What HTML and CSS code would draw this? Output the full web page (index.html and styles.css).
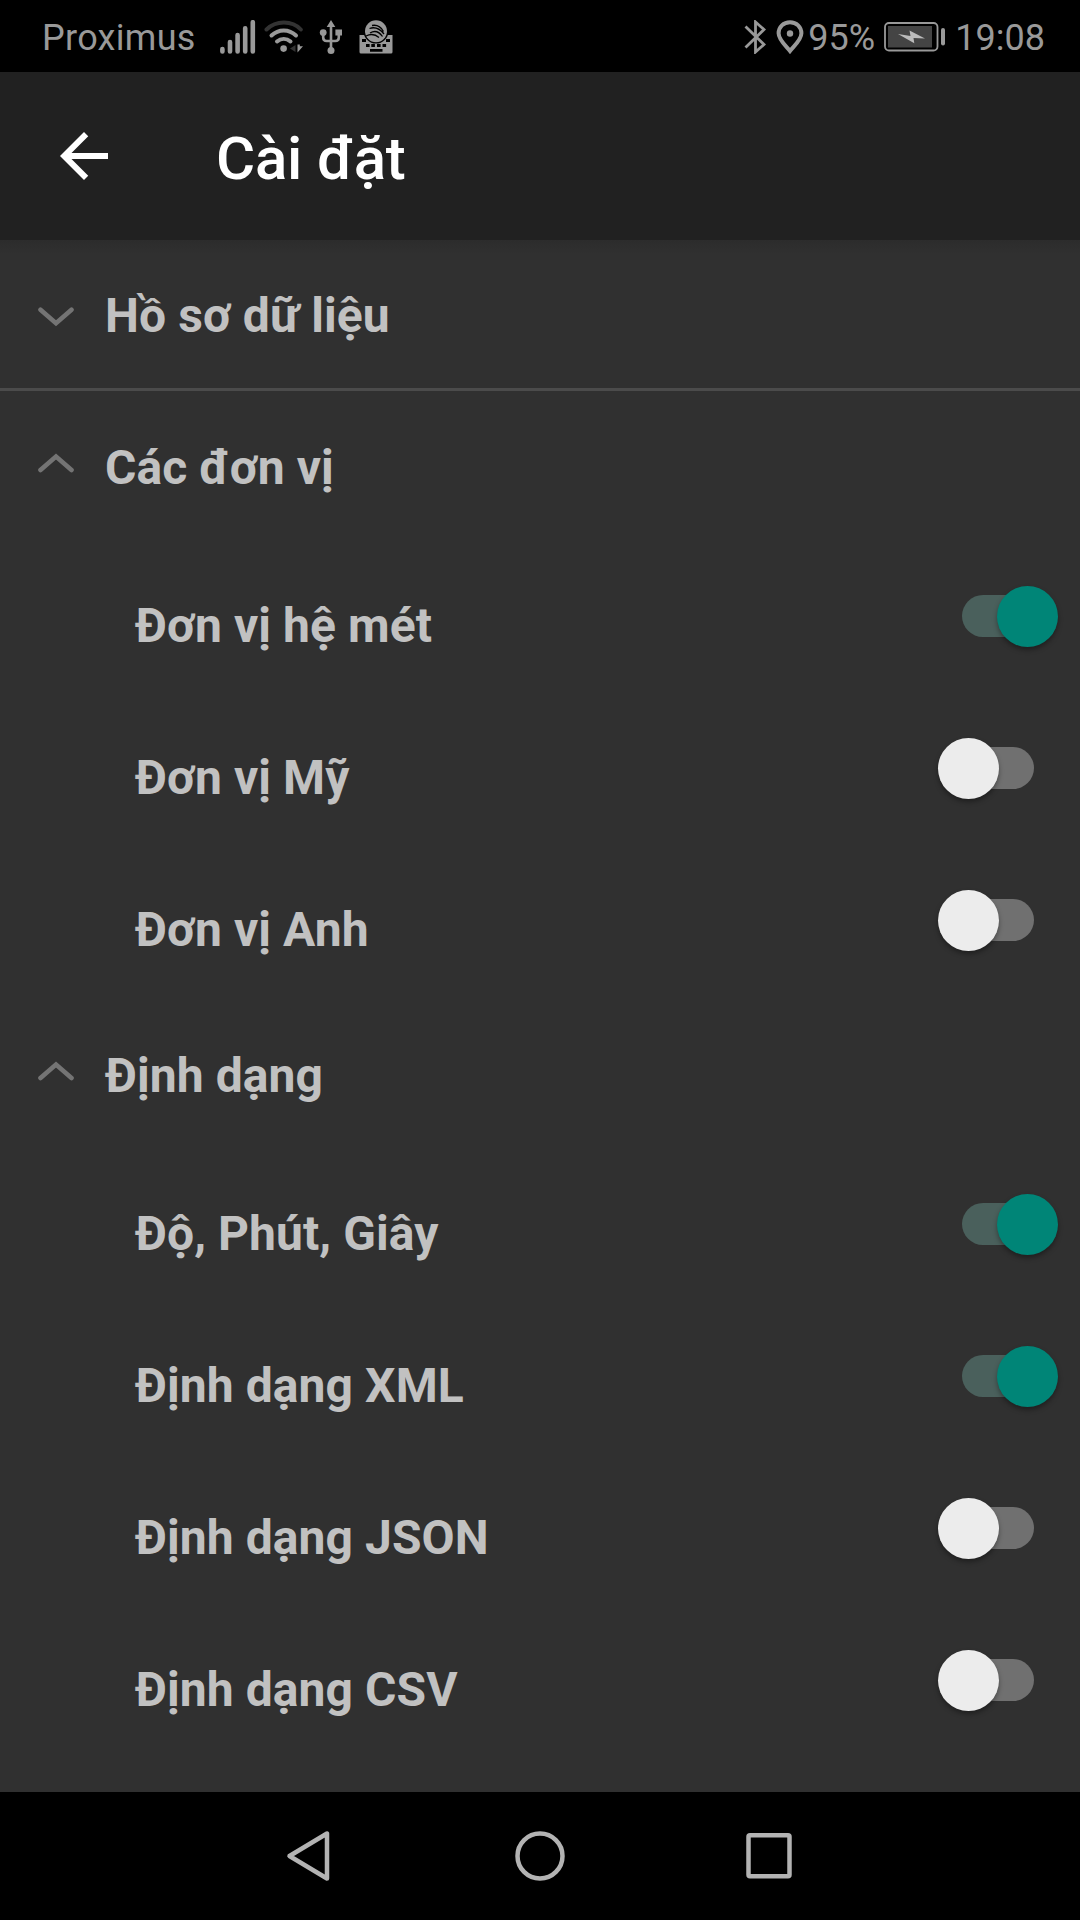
FILE: index.html
```html
<!DOCTYPE html>
<html lang="vi">
<head>
    <meta charset="UTF-8">
    <meta name="viewport" content="width=device-width, initial-scale=1.0">
    <title>Cài đặt</title>
    <link rel="stylesheet" href="styles.css">
</head>
<body>
    <div class="status-bar">
        <span class="carrier">Proximus</span>
        <svg class="signal" width="36" height="34" viewBox="0 0 36 34">
            <path d="M2.400 29v2.400M10 22v9.400M17.600 15v16.400M25.200 8.200v23.200M32.800 2.200v29.200"/>
        </svg>
        <svg class="wifi" width="40" height="34" viewBox="0 0 40 34">
            <path class="dim" d="M2.500 9.500C12 .2 28 .2 36.800 9.500"/>
            <path d="M7.500 15.500C14.500 8.700 25 8.700 32 15.500M13 21.500C17 18 22.500 18 26.500 21.500"/>
            <circle cx="19.600" cy="28.600" r="3.300"/>
            <path class="down" d="M31.500 25v7l-5.500-3.500z"/>
            <path class="up" d="M33.500 24.500v8l5.500-6.200h-3.200v-1.800z"/>
        </svg>
        <svg class="usb" width="24" height="34" viewBox="0 0 24 34">
            <path class="line" d="M12 4v25M4.200 13v4.500q0 3.500 3.500 3.500h8.600q3.500 0 3.500-3.500V13"/>
            <path d="M12 0l4.300 7H7.700zM16.400 9.500h6.600v6h-6.600z"/>
            <circle cx="4.200" cy="12.600" r="3.400"/>
            <circle cx="12" cy="30.400" r="3.500"/>
        </svg>
        <svg class="keyboard" width="34" height="34" viewBox="0 0 34 34">
            <path d="M.5 15h33v17q0 1.500-1.500 1.500H2q-1.500 0-1.500-1.500z"/>
            <circle class="ring" cx="17" cy="11.200" r="12.400"/>
            <circle cx="17" cy="11.200" r="11"/>
            <path class="swirl" d="M13 5.500c5-1 9 1.500 11.500 6M10.500 8.500C16 6.500 21 9 25 14M11 13c5-3 9-1.500 12.500 3.500M7 16c5-2.500 9-2 13 1.500"/>
            <path class="keys" d="M3 19h4v3H3zM27 19h4v3h-4zM7 24h3.600v3H7zM12.300 24h3.600v3h-3.600zM18 24h3.600v3H18zM23.500 24h3.600v3h-3.600zM11 29h12.500v2.800H11z"/>
        </svg>
        <svg class="bluetooth" width="22" height="34" viewBox="0 0 22 34">
            <path d="M1.500 6.500L20 24.500l-8.500 7.500V2L20 9.500 1.500 27.500"/>
        </svg>
        <svg class="location" width="28" height="34" viewBox="0 0 28 34">
            <path d="M14 2.200C7.500 2.200 2.600 7 2.600 13.300 2.600 20 10.500 26.500 14 31c3.500-4.500 11.400-11 11.400-17.700C25.400 7 20.500 2.200 14 2.200z"/>
            <circle cx="14" cy="13.500" r="3.200"/>
        </svg>
        <span class="percent">95%</span>
        <svg class="battery" width="62" height="30" viewBox="0 0 62 30">
            <rect class="outline" x="1" y="1" width="52.500" height="27.500" rx="4"/>
            <rect class="level" x="4" y="4" width="44" height="21.500"/>
            <path class="bolt" d="M14 12l12.500 2-1-5.500L41 16.500l-11.500-.5.800 5.300z"/>
            <rect class="tip" x="57" y="6" width="4" height="17.500" rx="2"/>
        </svg>
        <span class="clock">19:08</span>
    </div>

    <div class="toolbar">
        <svg class="back" width="72" height="72" viewBox="0 0 24 24">
            <path d="M20 11H7.830l5.590-5.590L12 4l-8 8 8 8 1.410-1.410L7.830 13H20z"/>
        </svg>
        <h1>Cài đặt</h1>
    </div>

    <div class="settings">
        <div class="group closed">
            <div class="group-header">
                <svg class="chevron" width="36" height="20" viewBox="0 0 36 20"><path d="M2.500 2.800L18 16.300 33.500 2.800"/></svg>
                <span>Hồ sơ dữ liệu</span>
            </div>
        </div>

        <div class="group">
            <div class="group-header">
                <svg class="chevron" width="36" height="20" viewBox="0 0 36 20"><path d="M2.500 17L18 3.500 33.500 17"/></svg>
                <span>Các đơn vị</span>
            </div>
            <div class="item"><span>Đơn vị hệ mét</span><div class="switch on"><div class="thumb"></div></div></div>
            <div class="item"><span>Đơn vị Mỹ</span><div class="switch"><div class="thumb"></div></div></div>
            <div class="item"><span>Đơn vị Anh</span><div class="switch"><div class="thumb"></div></div></div>
        </div>

        <div class="group">
            <div class="group-header">
                <svg class="chevron" width="36" height="20" viewBox="0 0 36 20"><path d="M2.500 17L18 3.500 33.500 17"/></svg>
                <span>Định dạng</span>
            </div>
            <div class="item"><span>Độ, Phút, Giây</span><div class="switch on"><div class="thumb"></div></div></div>
            <div class="item"><span>Định dạng XML</span><div class="switch on"><div class="thumb"></div></div></div>
            <div class="item"><span>Định dạng JSON</span><div class="switch"><div class="thumb"></div></div></div>
            <div class="item"><span>Định dạng CSV</span><div class="switch"><div class="thumb"></div></div></div>
        </div>
    </div>

    <div class="nav-bar">
        <svg width="50" height="52" viewBox="0 0 50 52"><path d="M41 3.500v45L3.500 26z"/></svg>
        <svg width="50" height="52" viewBox="0 0 50 52"><circle cx="25" cy="26" r="22.500"/></svg>
        <svg width="50" height="52" viewBox="0 0 50 52"><rect x="4.500" y="5.200" width="41" height="41" rx="1.500"/></svg>
    </div>
</body>
</html>
```

FILE: styles.css
```css
* {
    box-sizing: border-box;
}
body {
    font-family: Roboto, 'Noto Sans', sans-serif;
    margin: 0;
    width: 1080px;
    height: 1920px;
    background: #303030;
    display: flex;
    flex-direction: column;
    overflow: hidden;
}
svg {
    display: block;
    flex: none;
}

/* Status bar */
.status-bar {
    display: flex;
    align-items: center;
    height: 72px;
    padding: 2px 35px 0 42px;
    background: #000;
    color: #999;
    fill: #999;
    stroke: none;
    font-size: 36px;
    line-height: 42px;
}
.status-bar span {
    margin-top: 1px;
}
.carrier {
    width: 178px;
    letter-spacing: 0.3px;
}
.percent {
    width: 76px;
    margin-left: 4px;
}
.clock {
    margin-left: 9px;
}
.signal {
    stroke: #999;
    stroke-width: 4.6;
    stroke-linecap: round;
}
.wifi {
    margin-left: 8px;
}
.wifi path {
    fill: none;
    stroke: #999;
    stroke-width: 4;
    stroke-linecap: round;
}
.wifi .dim {
    stroke: #333;
}
.wifi .down {
    fill: #333;
    stroke: none;
}
.wifi .up {
    fill: #999;
    stroke: none;
}
.usb {
    margin-left: 15px;
}
.usb .line {
    fill: none;
    stroke: #999;
    stroke-width: 2.6;
}
.keyboard {
    margin-left: 16px;
}
.keyboard .ring, .keyboard .keys {
    fill: #000;
}
.keyboard .swirl {
    fill: none;
    stroke: #000;
    stroke-width: 1.3;
}
.bluetooth {
    margin-left: auto;
}
.bluetooth path {
    fill: none;
    stroke: #999;
    stroke-width: 2.8;
}
.location {
    margin-left: 10px;
}
.location path {
    fill: none;
    stroke: #999;
    stroke-width: 4;
}
.battery .outline {
    fill: none;
    stroke: #999;
    stroke-width: 1.8;
}
.battery .level {
    fill: #444;
}
.battery .bolt {
    fill: #bbb;
}

/* Toolbar */
.toolbar {
    display: flex;
    align-items: center;
    height: 168px;
    padding-left: 48px;
    background: #212121;
}
.back {
    fill: #fff;
}
h1 {
    margin: 5px 0 0 96px;
    color: #fff;
    font-size: 60px;
    font-weight: 500;
    line-height: 70px;
    letter-spacing: -0.2px;
}

/* Settings list */
.settings {
    flex: 1;
    background: linear-gradient(#2c2c2c, #303030 14px);
    color: #c1c1c1;
    font-size: 48px;
    font-weight: 700;
    line-height: 56px;
    letter-spacing: 0.08px;
}
.group.closed {
    height: 151px;
    margin-bottom: 1px;
    border-bottom: 3px solid #4b4b4b;
}
.group-header {
    display: flex;
    height: 152px;
    padding: 48px 0 0 38px;
    gap: 31px;
}
.group.closed .group-header {
    height: 148px;
}
.chevron {
    margin-top: 13px;
    fill: none;
    stroke: #747474;
    stroke-width: 4.6;
    stroke-linecap: round;
}
.closed .chevron {
    margin-top: 19px;
}
.item {
    display: flex;
    justify-content: space-between;
    height: 152px;
    padding: 42px 22px 0 135px;
}
.item span {
    margin-top: 12px;
}
.switch {
    position: relative;
    display: flex;
    width: 120px;
    height: 61px;
}
.switch::before {
    content: '';
    position: absolute;
    left: 24px;
    top: 9px;
    width: 72px;
    height: 42px;
    border-radius: 21px;
    background: #707070;
}
.switch.on::before {
    background: #4a605c;
}
.thumb {
    position: relative;
    width: 61px;
    height: 61px;
    border-radius: 50%;
    background: #ececec;
    box-shadow: 0 3px 5px rgba(0,0,0,0.35);
}
.switch.on {
    justify-content: flex-end;
}
.switch.on .thumb {
    background: #008577;
}

/* Navigation buttons */
.nav-bar {
    display: flex;
    justify-content: center;
    align-items: center;
    gap: 179px;
    height: 128px;
    background: #000;
}
.nav-bar svg {
    fill: none;
    stroke: #b3b3b3;
    stroke-width: 4.5;
    stroke-linejoin: round;
}
```
